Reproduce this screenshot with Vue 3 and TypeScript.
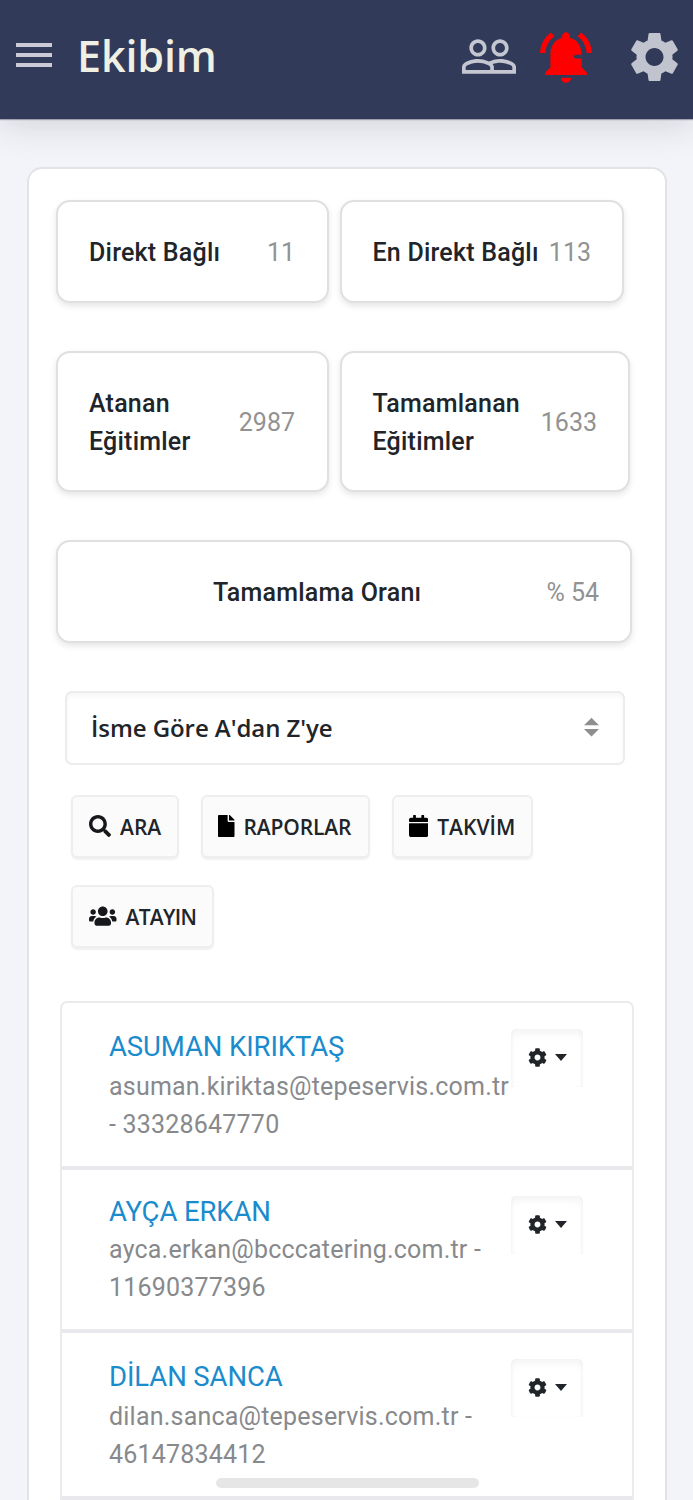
<script setup lang="ts">
interface Stat { label: string[]; value: string; kind: string }
interface Action { label: string; kind: string; box: string; path: string }
interface Member { name: string; lines: string[]; kind: string }

const statRows: Stat[][] = [
  [
    { label: ['Direkt Bağlı'], value: '11', kind: 'direct' },
    { label: ['En Direkt Bağlı'], value: '113', kind: 'nearest' },
  ],
  [
    { label: ['Atanan', 'Eğitimler'], value: '2987', kind: 'assigned' },
    { label: ['Tamamlanan', 'Eğitimler'], value: '1633', kind: 'finished' },
  ],
  [{ label: ['Tamamlama Oranı'], value: '% 54', kind: 'rate' }],
]

const actions: Action[] = [
  {
    label: 'ARA', kind: 'search', box: '0 0 512 512',
    path: 'M505 442.7L405.3 343c-4.5-4.5-10.6-7-17-7H372c27.6-35.3 44-79.7 44-128C416 93.1 322.9 0 208 0S0 93.1 0 208s93.1 208 208 208c48.3 0 92.7-16.4 128-44v16.3c0 6.4 2.5 12.5 7 17l99.7 99.7c9.4 9.4 24.6 9.4 33.9 0l28.3-28.3c9.4-9.4 9.4-24.6.1-34zM208 336c-70.7 0-128-57.2-128-128 0-70.7 57.2-128 128-128 70.7 0 128 57.2 128 128 0 70.7-57.2 128-128 128z',
  },
  {
    label: 'RAPORLAR', kind: 'reports', box: '0 0 384 512',
    path: 'M224 136V0H24C10.7 0 0 10.7 0 24v464c0 13.3 10.7 24 24 24h336c13.3 0 24-10.7 24-24V160H248c-13.2 0-24-10.8-24-24zm160-14.1v6.1H256V0h6.1c6.4 0 12.5 2.5 17 7l97.9 98c4.5 4.5 7 10.6 7 16.9z',
  },
  {
    label: 'TAKVİM', kind: 'calendar', box: '0 0 448 512',
    path: 'M12 192h424c6.6 0 12 5.4 12 12v260c0 26.5-21.5 48-48 48H48c-26.5 0-48-21.5-48-48V204c0-6.6 5.4-12 12-12zm436-44v-36c0-26.5-21.5-48-48-48h-48V12c0-6.6-5.4-12-12-12h-40c-6.6 0-12 5.4-12 12v52H160V12c0-6.6-5.4-12-12-12h-40c-6.6 0-12 5.4-12 12v52H48C21.5 64 0 85.5 0 112v36c0 6.6 5.4 12 12 12h424c6.6 0 12-5.4 12-12z',
  },
  {
    label: 'ATAYIN', kind: 'assign', box: '0 0 640 512',
    path: 'M96 224c35.3 0 64-28.7 64-64s-28.7-64-64-64-64 28.7-64 64 28.7 64 64 64zm448 0c35.3 0 64-28.7 64-64s-28.7-64-64-64-64 28.7-64 64 28.7 64 64 64zm32 32h-64c-17.6 0-33.5 7.1-45.1 18.6 40.3 22.1 68.9 62 75.1 109.4h66c17.7 0 32-14.3 32-32v-32c0-35.3-28.7-64-64-64zm-256 0c61.9 0 112-50.1 112-112S381.9 32 320 32 208 82.1 208 144s50.1 112 112 112zm76.8 32h-8.3c-20.8 10-43.9 16-68.5 16s-47.6-6-68.5-16h-8.3C179.6 288 128 339.6 128 403.2V432c0 26.5 21.5 48 48 48h288c26.5 0 48-21.5 48-48v-28.8c0-63.6-51.6-115.2-115.2-115.2zm-223.7-13.4C161.5 263.1 145.6 256 128 256H64c-35.3 0-64 28.7-64 64v32c0 17.7 14.3 32 32 32h65.9c6.3-47.4 34.9-87.3 75.2-109.4z',
  },
]

const members: Member[] = [
  { name: 'ASUMAN KIRIKTAŞ', lines: ['asuman.kiriktas@tepeservis.com.tr', '- 33328647770'], kind: 'first' },
  { name: 'AYÇA ERKAN', lines: ['ayca.erkan@bcccatering.com.tr -', '11690377396'], kind: 'second' },
  { name: 'DİLAN SANCA', lines: ['dilan.sanca@tepeservis.com.tr -', '46147834412'], kind: 'third' },
]
</script>

<template>
  <div class="screen">
    <header class="topbar">
      <div class="menu"><i></i><i></i><i></i></div>
      <h1 class="title">Ekibim</h1>
      <svg class="people" viewBox="1 5 22 14">
        <path d="M16.5 13c-1.2 0-3.07.34-4.5 1-1.43-.67-3.3-1-4.5-1C5.33 13 1 14.08 1 16.25V19h22v-2.75c0-2.17-4.33-3.25-6.5-3.25zm-4 4.5h-10v-1.25c0-.54 2.56-1.75 5-1.75s5 1.21 5 1.75v1.25zm9 0H14v-1.25c0-.46-.2-.86-.52-1.22.88-.3 1.96-.53 3.02-.53 2.44 0 5 1.21 5 1.75v1.25zM7.5 12c1.93 0 3.5-1.57 3.5-3.5S9.43 5 7.5 5 4 6.57 4 8.5 5.57 12 7.5 12zm0-5.5c1.1 0 2 .9 2 2s-.9 2-2 2-2-.9-2-2 .9-2 2-2zm9 5.5c1.93 0 3.5-1.57 3.5-3.5S18.43 5 16.5 5 13 6.57 13 8.5s1.57 3.5 3.5 3.5zm0-5.5c1.1 0 2 .9 2 2s-.9 2-2 2-2-.9-2-2 .9-2 2-2z" />
      </svg>
      <svg class="bell" viewBox="2 2.5 20 19.5">
        <path d="M7.58 4.08L6.15 2.65C3.75 4.48 2.17 7.3 2.03 10.5h2c.15-2.65 1.51-4.97 3.55-6.42zm12.39 6.42h2c-.15-3.2-1.73-6.02-4.12-7.85l-1.42 1.43c2.02 1.45 3.39 3.77 3.54 6.42zM18 11c0-3.07-1.64-5.64-4.5-6.32V4c0-.83-.67-1.5-1.5-1.5s-1.5.67-1.5 1.5v.68C7.63 5.36 6 7.92 6 11v5l-2 2v1h16v-1l-2-2v-5zM10 20a2 2 0 0 0 4 0z" />
        <path class="notch" d="M15.7 11.2H19v1.4h-3.3a.7.7 0 0 1 0-1.4z" />
      </svg>
      <svg class="settings" viewBox="2.2 2 19.6 20">
        <path d="M19.14 12.94c.04-.3.06-.61.06-.94 0-.32-.02-.64-.07-.94l2.03-1.58c.18-.14.23-.41.12-.61l-1.92-3.32c-.12-.22-.37-.29-.59-.22l-2.39.96c-.5-.38-1.03-.7-1.62-.94l-.36-2.54c-.04-.24-.24-.41-.48-.41h-3.84c-.24 0-.43.17-.47.41l-.36 2.54c-.59.24-1.13.57-1.62.94l-2.39-.96c-.22-.08-.47 0-.59.22L2.74 8.87c-.12.21-.08.47.12.61l2.03 1.58c-.05.3-.09.63-.09.94s.02.64.07.94l-2.03 1.58c-.18.14-.23.41-.12.61l1.92 3.32c.12.22.37.29.59.22l2.39-.96c.5.38 1.03.7 1.62.94l.36 2.54c.05.24.24.41.48.41h3.84c.24 0 .44-.17.47-.41l.36-2.54c.59-.24 1.13-.56 1.62-.94l2.39.96c.22.08.47 0 .59-.22l1.92-3.32c.12-.22.07-.47-.12-.61l-2.01-1.58zM12 15.6c-1.98 0-3.6-1.62-3.6-3.6s1.62-3.6 3.6-3.6 3.6 1.62 3.6 3.6-1.62 3.6-3.6 3.6z" />
      </svg>
    </header>

    <main class="panel">
      <section v-for="(row, r) in statRows" :key="r" class="stat-row">
        <div v-for="stat in row" :key="stat.kind" class="stat" :class="stat.kind">
          <div class="stat-label"><span v-for="line in stat.label" :key="line">{{ line }}</span></div>
          <span class="stat-value">{{ stat.value }}</span>
        </div>
      </section>

      <div class="select">
        <span>İsme Göre A'dan Z'ye</span>
        <svg viewBox="0 0 4 5"><path d="M2 0L0 2h4zM2 5L0 3h4z" /></svg>
      </div>

      <div class="actions">
        <button v-for="a in actions" :key="a.kind" class="action" :class="a.kind" type="button">
          <svg :viewBox="a.box"><path :d="a.path" /></svg>
          <span>{{ a.label }}</span>
        </button>
      </div>

      <div class="list">
        <article v-for="m in members" :key="m.name" class="member" :class="m.kind">
          <div class="info">
            <a class="name">{{ m.name }}</a>
            <span v-for="line in m.lines" :key="line" class="detail">{{ line }}</span>
          </div>
          <div class="tool">
            <svg class="cog" viewBox="0 0 512 512">
              <path d="M487.4 315.7l-42.6-24.6c4.3-23.2 4.3-47 0-70.2l42.6-24.6c4.9-2.8 7.1-8.6 5.5-14-11.1-35.6-30-67.8-54.7-94.6-3.8-4.1-10-5.1-14.8-2.3L380.8 110c-17.9-15.4-38.5-27.3-60.8-35.1V25.8c0-5.6-3.9-10.5-9.4-11.7-36.7-8.2-74.3-7.8-109.2 0-5.5 1.2-9.4 6.1-9.4 11.7V75c-22.2 7.9-42.8 19.8-60.8 35.1L88.7 85.5c-4.9-2.8-11-1.9-14.8 2.3-24.7 26.7-43.6 58.9-54.7 94.6-1.7 5.4.6 11.2 5.5 14L67.3 221c-4.3 23.2-4.3 47 0 70.2l-42.6 24.6c-4.9 2.8-7.1 8.6-5.5 14 11.1 35.6 30 67.8 54.7 94.6 3.8 4.1 10 5.1 14.8 2.3l42.6-24.6c17.9 15.4 38.5 27.3 60.8 35.1v49.2c0 5.6 3.9 10.5 9.4 11.7 36.7 8.2 74.3 7.8 109.2 0 5.5-1.2 9.4-6.1 9.4-11.7v-49.2c22.2-7.9 42.8-19.8 60.8-35.1l42.6 24.6c4.9 2.8 11 1.9 14.8-2.3 24.7-26.7 43.6-58.9 54.7-94.6 1.5-5.5-.7-11.3-5.6-14.1zM256 336c-44.1 0-80-35.9-80-80s35.9-80 80-80 80 35.9 80 80-35.9 80-80 80z" />
            </svg>
            <i class="caret"></i>
          </div>
        </article>
      </div>
    </main>

    <div class="home-bar"></div>
  </div>
</template>

<style>
body { background: #f3f4f9; }
</style>

<style scoped>
* { box-sizing: border-box; }
.screen {
  position: relative;
  width: 693px;
  height: 1500px;
  overflow: hidden;
  background: #f3f4f9;
  font-family: Roboto, "Liberation Sans", sans-serif;
  font-size: 25px;
  line-height: 37.5px;
  color: #212529;
  white-space: nowrap;
}
svg { display: block; flex: none; }
.topbar {
  display: flex;
  align-items: flex-start;
  height: 119px;
  padding-left: 16px;
  background: #313a59;
  box-shadow: 0 1px 1px rgba(60, 65, 85, .4), 0 5px 34px rgba(40, 42, 53, .17);
}
.menu { display: flex; flex-direction: column; gap: 6px; width: 36px; margin-top: 43px; }
.menu i { height: 4px; background: #cbcbd8; }
.title {
  width: 383px;
  margin: 27px 0 0 25px;
  font: 600 43px/58px "Open Sans", "Noto Sans", sans-serif;
  letter-spacing: -.1px;
  color: #f0efe4;
}
.people { width: 54px; height: 35px; margin: 39px 0 0 2px; fill: #c4c7d1; }
.bell { width: 52px; height: 51px; margin: 32px 0 0 24px; fill: #fe0000; }
.notch { fill: #313a59; }
.settings { width: 49px; height: 50px; margin: 32px 0 0 37.5px; fill: #c1c4ce; }

.panel {
  width: 640px;
  height: 1400px;
  margin: 48px 0 0 27px;
  padding: 31px 0 0 27px;
  border: 2px solid #e3e3e7;
  border-radius: 15px;
  background: #fff;
}
.stat-row { display: flex; gap: 11px; margin-bottom: 48px; }
.stat {
  display: flex;
  align-items: center;
  justify-content: space-between;
  height: 103px;
  padding: 2px 31px 0 31px;
  border: 2px solid #e0e0e2;
  border-radius: 14px;
  background: #fff;
  box-shadow: 0 3px 6px rgba(0, 0, 0, .1);
}
.stat-label { display: flex; flex-direction: column; font-weight: 500; letter-spacing: .22px; }
.stat-value { color: #929292; }
.direct, .assigned { width: 273px; padding-right: 32px; }
.nearest { width: 284px; padding-left: 30.5px; }
.finished { width: 290px; padding-left: 30.5px; }
.assigned, .finished { height: 141px; }
.rate { width: 576px; padding-left: 155px; }

.select {
  display: flex;
  align-items: center;
  justify-content: space-between;
  width: 560px;
  height: 74px;
  margin: 0 0 30px 9px;
  padding: 0 24px;
  border: 2px solid #ececec;
  border-radius: 7px;
  box-shadow: inset 0 3px 4px rgba(0, 0, 0, .04);
  font: 600 24px/36px "Open Sans", "Noto Sans", sans-serif;
  letter-spacing: -.06px;
}
.select svg { width: 15px; height: 20px; margin-top: -2px; fill: #8f8f8f; }

.actions { display: flex; flex-wrap: wrap; gap: 27px 22px; width: 500px; margin: 0 0 53px 15px; }
.action {
  display: flex;
  align-items: center;
  height: 63px;
  padding: 0 0 0 16px;
  border: 2px solid #eee;
  border-radius: 6px;
  background: #fbfbfb;
  box-shadow: 0 2px 2px rgba(0, 0, 0, .06);
  color: #212529;
  font: 600 21px/30px "Open Sans", "Noto Sans", sans-serif;
}
.action svg { height: 22px; margin-right: 9px; margin-top: -2px; fill: #16181b; }
.search { width: 108px; }
.reports { width: 169px; padding-left: 15px; letter-spacing: -.15px; }
.calendar { width: 141px; padding-left: 15px; }
.assign { width: 143px; letter-spacing: -.7px; }
.reports svg, .calendar svg { fill: #000; }

.list { width: 574px; margin-left: 4px; border: 2px solid #ebebee; border-radius: 7px 7px 0 0; }
.member { display: flex; align-items: flex-start; height: 167px; border-bottom: 4px solid #e9e9ed; }
.second { height: 163px; }
.third { height: 167px; }
.info { display: flex; flex-direction: column; width: 402px; margin-left: 47px; padding-top: 25px; }
.second .info { padding-top: 23px; }
.name { height: 40px; color: #1a8bcd; font-size: 27.5px; letter-spacing: -.1px; }
.second .name { height: 38px; }
.detail { color: #87898c; letter-spacing: .21px; }
.tool {
  display: flex;
  align-items: center;
  justify-content: center;
  gap: 8px;
  width: 72px;
  height: 58px;
  margin: 26px 0 0;
  padding-bottom: 2px;
  border-radius: 5px 5px 0 0;
  box-shadow: inset 0 5px 7px rgba(0, 0, 0, .045), inset 2px 0 2px rgba(0, 0, 0, .02), inset -2px 0 2px rgba(0, 0, 0, .02);
}
.cog { width: 19px; height: 19px; fill: #212529; }
.caret { border: 6px solid transparent; border-top: 7px solid #212529; border-bottom: 0; }
.home-bar {
  position: absolute;
  left: 216px;
  top: 1478px;
  width: 263px;
  height: 10px;
  border-radius: 5px;
  background: #e6e6e6;
}
</style>
